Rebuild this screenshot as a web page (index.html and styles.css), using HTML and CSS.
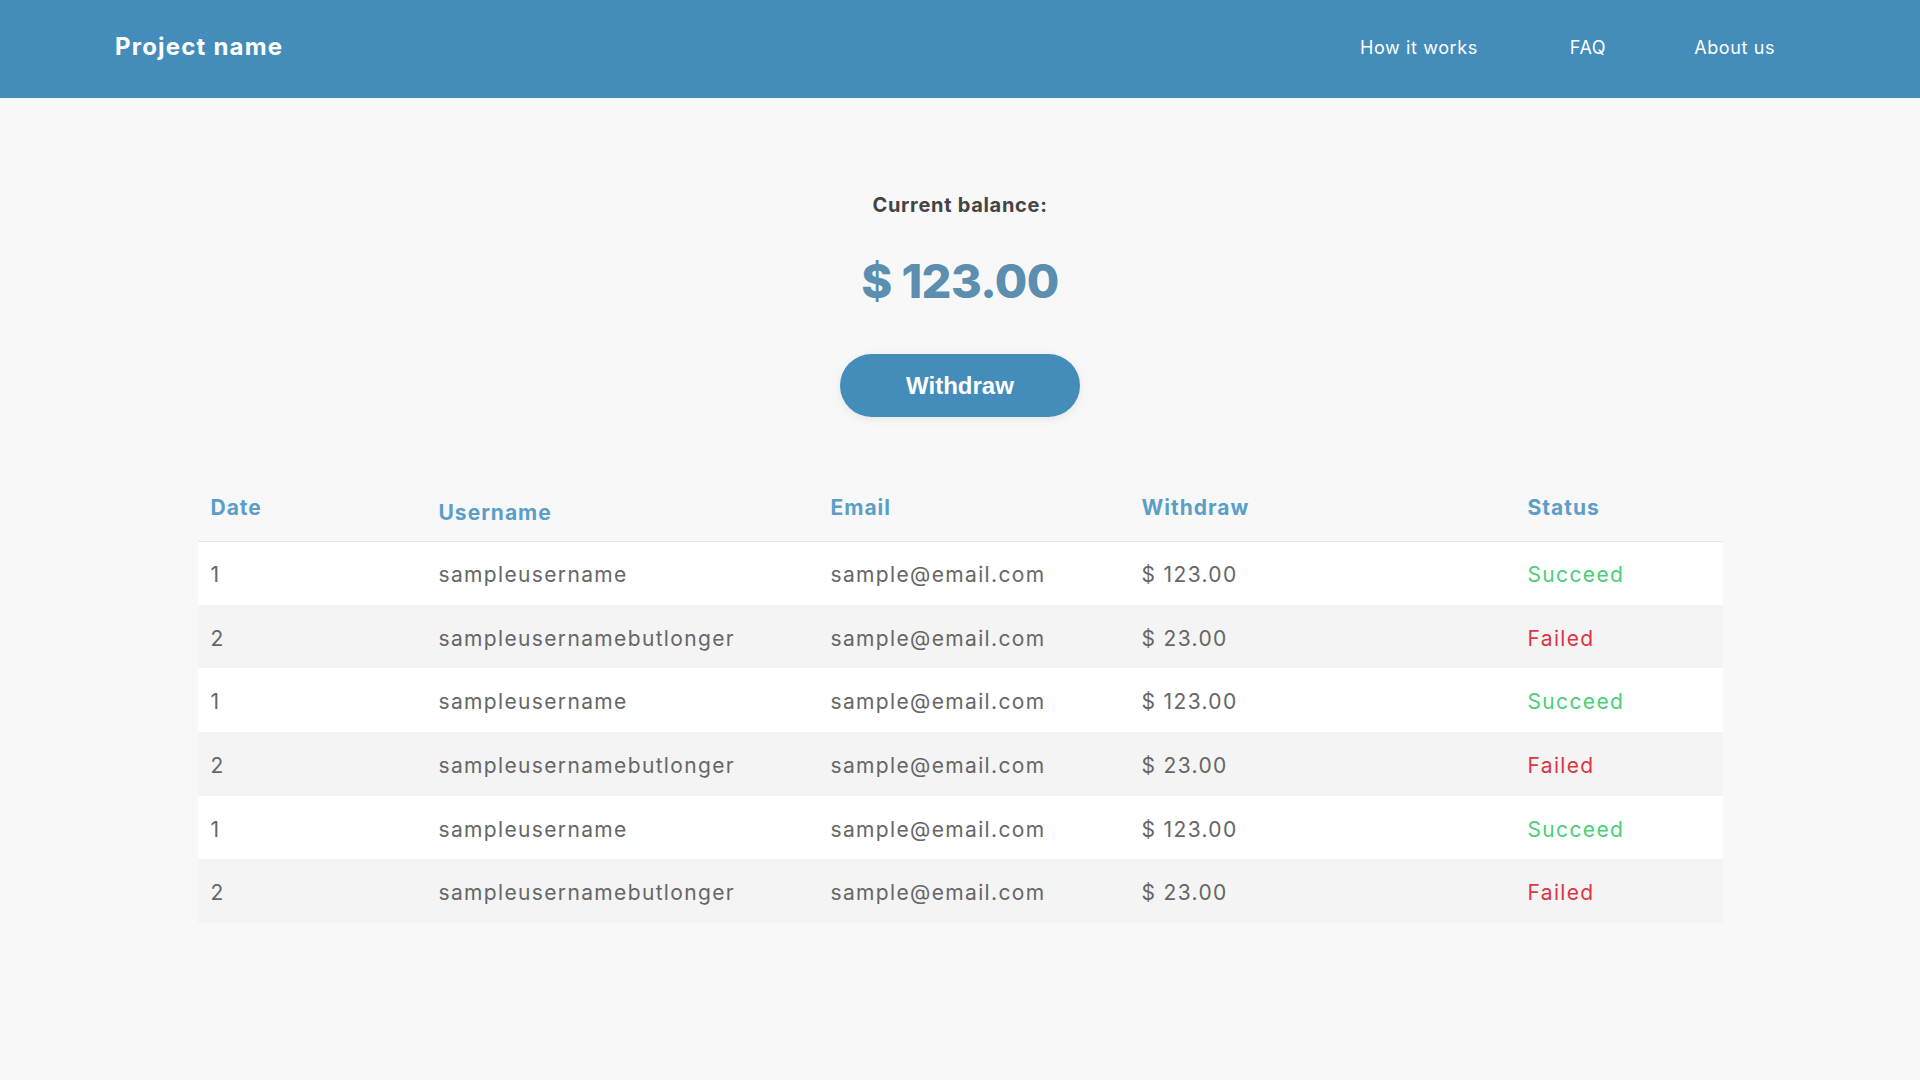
FILE: index.html
```html
<!DOCTYPE html>
<html lang="en">
<head>
<meta charset="utf-8">
<title>Project name</title>
<link rel="stylesheet" href="styles.css">
</head>
<body>
<header class="topbar">
  <div class="brand">Project name</div>
  <nav class="nav">
    <a class="nav-link" href="#">How it works</a>
    <a class="nav-link" href="#">FAQ</a>
    <a class="nav-link" href="#">About us</a>
  </nav>
</header>
<main class="main">
  <section class="balance">
    <div class="balance-label">Current balance:</div>
    <div class="balance-amount">$ 123.00</div>
    <button class="btn-withdraw">Withdraw</button>
  </section>
  <table class="history">
    <colgroup>
      <col class="c-date"><col class="c-user"><col class="c-email"><col class="c-amount"><col class="c-status">
    </colgroup>
    <thead>
      <tr>
        <th>Date</th>
        <th class="th-low">Username</th>
        <th>Email</th>
        <th>Withdraw</th>
        <th>Status</th>
      </tr>
    </thead>
    <tbody>
      <tr><td>1</td><td>sampleusername</td><td>sample@email.com</td><td>$ 123.00</td><td class="ok">Succeed</td></tr>
      <tr><td>2</td><td>sampleusernamebutlonger</td><td>sample@email.com</td><td>$ 23.00</td><td class="fail">Failed</td></tr>
      <tr><td>1</td><td>sampleusername</td><td>sample@email.com</td><td>$ 123.00</td><td class="ok">Succeed</td></tr>
      <tr><td>2</td><td>sampleusernamebutlonger</td><td>sample@email.com</td><td>$ 23.00</td><td class="fail">Failed</td></tr>
      <tr><td>1</td><td>sampleusername</td><td>sample@email.com</td><td>$ 123.00</td><td class="ok">Succeed</td></tr>
      <tr><td>2</td><td>sampleusernamebutlonger</td><td>sample@email.com</td><td>$ 23.00</td><td class="fail">Failed</td></tr>
    </tbody>
  </table>
</main>
</body>
</html>
```
FILE: styles.css
```css
* { box-sizing: border-box; }
html, body { margin: 0; padding: 0; }
body {
  background: #f8f8f8;
  font-family: Inter, "Open Sans", sans-serif;
  color: #666;
}
.topbar {
  height: 98px;
  background: #448dba;
  display: flex;
  align-items: center;
  justify-content: space-between;
  padding: 0 145px 0 115px;
}
.brand {
  color: #fff;
  font-weight: 700;
  font-size: 24px;
  line-height: 30px;
  letter-spacing: 1.2px;
  margin-top: -4px;
}
.nav { display: flex; gap: 88px; margin-top: -3px; }
.nav-link {
  color: #fff;
  text-decoration: none;
  font-size: 18px;
  line-height: 24px;
  letter-spacing: 0.6px;
}
.nav-link:first-child { margin-right: 4px; }
.main { padding-top: 95px; padding-bottom: 100px; }
.balance { display: flex; flex-direction: column; align-items: center; }
.balance-label {
  font-size: 20px;
  line-height: 24px;
  font-weight: 700;
  color: #444;
  letter-spacing: 0.7px;
}
.balance-amount {
  margin-top: 35px;
  font-size: 47px;
  line-height: 58px;
  font-weight: 800;
  color: #5b8eaf;
  letter-spacing: -0.6px;
}
.btn-withdraw {
  margin-top: 44px;
  width: 240px;
  height: 63px;
  border: none;
  border-radius: 32px;
  background: #448dba;
  color: #fff;
  font-family: "Liberation Sans", Arial, sans-serif;
  font-weight: 700;
  font-size: 24px;
  box-shadow: 0 2px 10px rgba(0,0,0,0.08);
}
.history {
  margin: 58px auto 0;
  width: 1525px;
  table-layout: fixed;
  border-collapse: collapse;
}
.c-date { width: 228px; }
.c-user { width: 392px; }
.c-email { width: 311px; }
.c-amount { width: 386px; }
.c-status { width: 208px; }
.history th {
  height: 66px;
  text-align: left;
  padding: 0 13px;
  font-size: 21px;
  font-weight: 700;
  letter-spacing: 1px;
  color: #5b9ec8;
  border-bottom: 1px solid #e6e6e6;
  vertical-align: middle;
}
.history th.th-low { padding-top: 10px; }
.history td {
  height: 63.7px;
  padding: 3px 13px 0;
  font-size: 21px;
  letter-spacing: 1.35px;
  color: #666;
  vertical-align: middle;
}
.history tbody tr:nth-child(odd) { background: #ffffff; }
.history tbody tr:nth-child(even) { background: #f4f4f4; }
.history td.ok { color: #4ccd78; }
.history td.fail { color: #dc3545; }
```
